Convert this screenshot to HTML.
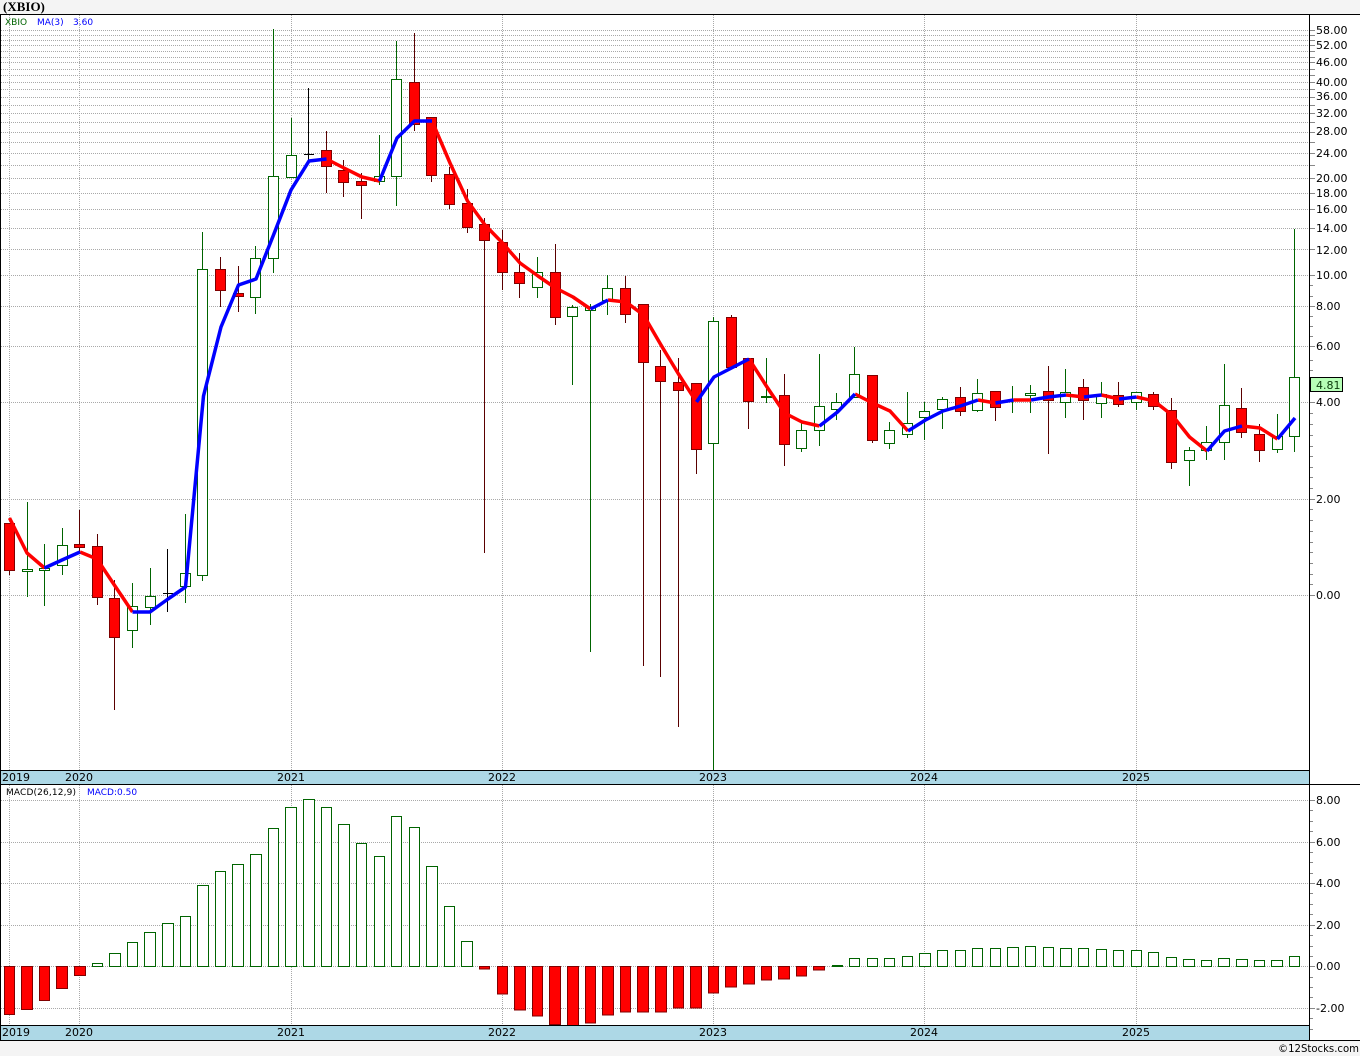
<!DOCTYPE html>
<html>
<head>
<meta charset="utf-8">
<title>XBIO</title>
<style>
html,body{margin:0;padding:0;background:#f4f4f4;width:1360px;height:1056px;overflow:hidden}
svg{display:block;position:absolute;left:0;top:0}
text{font-family:"DejaVu Sans","Liberation Sans",sans-serif;font-size:11px;fill:#000}
.t{font-family:"Liberation Serif","DejaVu Serif",serif;font-weight:bold;font-size:13px;fill:#000}
.s{font-size:9px}
</style>
</head>
<body>
<svg width="1360" height="1056" viewBox="0 0 1360 1056" xmlns="http://www.w3.org/2000/svg">
<rect x="0" y="0" width="1360" height="1056" fill="#f4f4f4"/>
<rect x="0" y="14" width="1360" height="1027" fill="#fff"/>

<!-- grid upper -->
<path fill="none" stroke="#a9a9a9" stroke-width="1" stroke-dasharray="1 1" shape-rendering="crispEdges" d="M1 30.5H1310M1 35.5H1310M1 40.5H1310M1 45.5H1310M1 51.5H1310M1 57.5H1310M1 62.5H1310M1 69.5H1310M1 75.5H1310M1 82.5H1310M1 89.5H1310M1 97.5H1310M1 105.5H1310M1 113.5H1310M1 122.5H1310M1 132.5H1310M1 142.5H1310M1 153.5H1310M1 165.5H1310M1 178.5H1310M1 193.5H1310M1 209.5H1310M1 228.5H1310M1 249.5H1310M1 275.5H1310M1 306.5H1310M1 346.5H1310M1 402.5H1310M1 499.5H1310M1 595.5H1310M9.5 15V770M79.5 15V770M291.5 15V770M502.5 15V770M713.5 15V770M924.5 15V770M1136.5 15V770"/>
<!-- grid lower -->
<path fill="none" stroke="#a9a9a9" stroke-width="1" stroke-dasharray="1 1" shape-rendering="crispEdges" d="M1 800.5H1310M1 842.5H1310M1 883.5H1310M1 925.5H1310M1 966.5H1310M1 1008.5H1310M9.5 785V1025M79.5 785V1025M291.5 785V1025M502.5 785V1025M713.5 785V1025M924.5 785V1025M1136.5 785V1025"/>
<!-- axis ticks -->
<path fill="none" stroke="#888" stroke-width="1" d="M1310 30.5h5M1310 35.5h5M1310 40.5h5M1310 45.5h5M1310 51.5h5M1310 57.5h5M1310 62.5h5M1310 69.5h5M1310 75.5h5M1310 82.5h5M1310 89.5h5M1310 97.5h5M1310 105.5h5M1310 113.5h5M1310 122.5h5M1310 132.5h5M1310 142.5h5M1310 153.5h5M1310 165.5h5M1310 178.5h5M1310 193.5h5M1310 209.5h5M1310 228.5h5M1310 249.5h5M1310 275.5h5M1310 285.5h3M1310 296.5h3M1310 306.5h5M1310 316.5h3M1310 326.5h3M1310 336.5h3M1310 346.5h5M1310 360.5h3M1310 370.5h3M1310 381.5h3M1310 391.5h3M1310 402.5h5M1310 413.5h3M1310 424.5h3M1310 435.5h3M1310 446.5h3M1310 456.5h3M1310 467.5h3M1310 477.5h3M1310 488.5h3M1310 499.5h5M1310 509.5h3M1310 520.5h3M1310 531.5h3M1310 542.5h3M1310 552.5h3M1310 563.5h3M1310 574.5h3M1310 584.5h3M1310 595.5h5M1310 800.5h5M1310 810.5h3M1310 821.5h3M1310 831.5h3M1310 842.5h5M1310 852.5h3M1310 862.5h3M1310 873.5h3M1310 883.5h5M1310 893.5h3M1310 904.5h3M1310 914.5h3M1310 925.5h5M1310 935.5h3M1310 946.5h3M1310 956.5h3M1310 966.5h5M1310 977.5h3M1310 987.5h3M1310 997.5h3M1310 1008.5h5M1310 1018.5h3M1310 1029.5h3"/>

<!-- green wicks -->
<path fill="none" stroke="#006400" stroke-width="1" d="M27.5 502V597M44.5 544V606M62.5 528V575M132.5 583V648M150.5 568V625M185.5 514V603M202.5 232V581M255.5 246V314M273.5 29V273M291.5 118V178M379.5 135V185M396.5 41V206M537.5 257V298M572.5 305V385M590.5 304V652M607.5 275V315M713.5 317V770M766.5 358V403M801.5 422V452M819.5 354V446M836.5 393V420M854.5 347V397M889.5 422V449M907.5 392V438M924.5 402V440M942.5 397V429M977.5 379V412M1012.5 386V413M1030.5 385V413M1065.5 369V418M1101.5 382V418M1136.5 392V410M1189.5 447V486M1206.5 426V460M1224.5 364V460M1277.5 414V453M1294.5 229V452"/>
<!-- red wicks -->
<path fill="none" stroke="#5a0000" stroke-width="1" d="M9.5 523V575M79.5 510V553M97.5 534V605M114.5 580V710M220.5 257V307M238.5 266V312M326.5 131V193M343.5 160V197M361.5 173V219M414.5 33V131M431.5 117V182M449.5 167V209M467.5 189V233M484.5 218V553M502.5 230V290M519.5 253V298M555.5 244V325M625.5 276V323M643.5 304V666M660.5 350V677M678.5 358V727M696.5 383V474M731.5 315V368M748.5 358V429M784.5 374V466M872.5 375V443M960.5 387V416M995.5 391V421M1048.5 366V454M1083.5 379V420M1118.5 382V407M1153.5 392V410M1171.5 398V469M1241.5 388V438M1259.5 424V462"/>
<!-- black dojis -->
<path fill="none" stroke="#000" stroke-width="1" d="M167.5 549V612M163 593.5H173M308.5 88V162M304 154.5H314"/>
<rect x="761" y="396" width="11" height="2" fill="#006400"/>

<!-- green bodies -->
<path fill="#fff" stroke="#006400" stroke-width="1" d="M22.5 569.5h10v2h-10zM39.5 568.5h10v2h-10zM57.5 545.5h10v20h-10zM127.5 606.5h10v24h-10zM145.5 596.5h10v11h-10zM180.5 573.5h10v13h-10zM197.5 269.5h10v306h-10zM250.5 258.5h10v39h-10zM268.5 176.5h10v82h-10zM286.5 155.5h10v22h-10zM374.5 176.5h10v5h-10zM391.5 79.5h10v97h-10zM532.5 272.5h10v15h-10zM567.5 307.5h10v9h-10zM585.5 307.5h10v3h-10zM602.5 288.5h10v12h-10zM708.5 321.5h10v122h-10zM796.5 430.5h10v18h-10zM814.5 406.5h10v24h-10zM831.5 402.5h10v7h-10zM849.5 374.5h10v23h-10zM884.5 430.5h10v13h-10zM902.5 423.5h10v11h-10zM919.5 411.5h10v6h-10zM937.5 399.5h10v10h-10zM972.5 393.5h10v17h-10zM1025.5 393.5h10v2h-10zM1060.5 392.5h10v10h-10zM1096.5 394.5h10v9h-10zM1131.5 392.5h10v10h-10zM1184.5 450.5h10v10h-10zM1201.5 442.5h10v8h-10zM1219.5 405.5h10v37h-10zM1272.5 436.5h10v13h-10zM1289.5 377.5h10v59h-10z"/>
<!-- red bodies -->
<path fill="#f00" stroke="#800000" stroke-width="1" d="M4.5 523.5h10v47h-10zM74.5 544.5h10v3h-10zM92.5 546.5h10v51h-10zM109.5 598.5h10v39h-10zM215.5 269.5h10v21h-10zM233.5 293.5h10v3h-10zM321.5 150.5h10v16h-10zM338.5 170.5h10v12h-10zM356.5 181.5h10v4h-10zM409.5 82.5h10v42h-10zM426.5 117.5h10v58h-10zM444.5 174.5h10v30h-10zM462.5 203.5h10v24h-10zM479.5 224.5h10v16h-10zM497.5 242.5h10v30h-10zM514.5 272.5h10v11h-10zM550.5 272.5h10v45h-10zM620.5 288.5h10v26h-10zM638.5 304.5h10v58h-10zM655.5 366.5h10v15h-10zM673.5 382.5h10v8h-10zM691.5 383.5h10v66h-10zM726.5 317.5h10v50h-10zM743.5 358.5h10v43h-10zM779.5 395.5h10v49h-10zM867.5 375.5h10v65h-10zM955.5 397.5h10v14h-10zM990.5 391.5h10v16h-10zM1043.5 391.5h10v9h-10zM1078.5 387.5h10v13h-10zM1113.5 395.5h10v9h-10zM1148.5 394.5h10v12h-10zM1166.5 410.5h10v52h-10zM1236.5 408.5h10v24h-10zM1254.5 434.5h10v16h-10z"/>

<!-- MA lines -->
<path fill="none" stroke="#f00" stroke-width="3.5" stroke-linejoin="round" d="M9.5 518L27 553L44.5 568M80 552L97 559L115 586L132.5 612M326.5 159L344 168L362 177L379.5 181M432 121L450 163L467.5 201L485 225L502.5 243L520 263L538 276L555.5 288L573 297L590.5 309M608 300L626 302L643.5 315L661 345L678.5 374L696.5 402M749 359L767 387L784.5 413L802 422L819.5 426M855 394L872.5 403L890 411L908 431M978 400L995.5 403M1013.5 400L1031 400M1066 395L1084 397M1101.5 395L1119 399M1136.5 397L1154 401L1172 415L1189.5 437L1207 451M1242 426L1260 428L1277.5 439"/>
<path fill="none" stroke="#00f" stroke-width="3.5" stroke-linejoin="round" d="M44.5 568L62 560L80 552M132.5 612L150 612L168 599L185.5 587L203.5 396L221 327L238.5 285L256 279L273.5 235L291 190L309 161L326.5 159M379.5 181L397 138L414.5 121L432 121M590.5 309L608 300M696.5 402L714 377L731.5 368L749 359M819.5 426L837.5 412L855 394M908 431L925.5 420L943 411L960.5 406L978 400M995.5 403L1013.5 400M1031 400L1048.5 397L1066 395M1084 397L1101.5 395M1119 399L1136.5 397M1207 451L1224.5 431L1242 426M1277.5 439L1295 418"/>

<!-- MACD green -->
<path fill="#fff" stroke="#006400" stroke-width="1" d="M92.5 963.5h10v3h-10zM109.5 953.5h11v13h-11zM127.5 942.5h10v24h-10zM144.5 932.5h11v34h-11zM162.5 923.5h11v43h-11zM180.5 916.5h10v50h-10zM197.5 885.5h11v81h-11zM215.5 871.5h10v95h-10zM232.5 864.5h11v102h-11zM250.5 854.5h11v112h-11zM268.5 828.5h10v138h-10zM285.5 807.5h11v159h-11zM303.5 799.5h11v167h-11zM321.5 807.5h10v159h-10zM338.5 824.5h11v142h-11zM356.5 843.5h10v123h-10zM374.5 856.5h10v110h-10zM391.5 816.5h10v150h-10zM409.5 827.5h10v139h-10zM426.5 866.5h11v100h-11zM444.5 906.5h10v60h-10zM461.5 941.5h11v25h-11zM849.5 958.5h10v8h-10zM867.5 958.5h10v8h-10zM884.5 958.5h10v8h-10zM902.5 956.5h10v10h-10zM919.5 953.5h11v13h-11zM937.5 950.5h10v16h-10zM955.5 950.5h10v16h-10zM972.5 948.5h10v18h-10zM990.5 948.5h10v18h-10zM1007.5 947.5h11v19h-11zM1025.5 946.5h10v20h-10zM1043.5 947.5h10v19h-10zM1060.5 948.5h11v18h-11zM1078.5 948.5h10v18h-10zM1096.5 949.5h10v17h-10zM1113.5 950.5h10v16h-10zM1131.5 950.5h10v16h-10zM1148.5 952.5h10v14h-10zM1166.5 957.5h10v9h-10zM1183.5 959.5h11v7h-11zM1201.5 960.5h10v6h-10zM1218.5 958.5h11v8h-11zM1236.5 959.5h11v7h-11zM1254.5 960.5h10v6h-10zM1271.5 960.5h11v6h-11zM1289.5 956.5h10v10h-10z"/>
<rect x="832" y="965" width="11" height="2" fill="#006400"/>
<!-- MACD red -->
<path fill="#f00" stroke="#800000" stroke-width="1" d="M4.5 966.5h10V1014.5h-10zM21.5 966.5h11V1009.5h-11zM39.5 966.5h10V1000.5h-10zM56.5 966.5h11V988.5h-11zM74.5 966.5h11V975.5h-11zM479.5 966.5h10V969h-10zM497.5 966.5h10V994h-10zM514.5 966.5h11V1010h-11zM532.5 966.5h10V1016h-10zM549.5 966.5h11V1024.5h-11zM567.5 966.5h11V1026h-11zM585.5 966.5h10V1023h-10zM602.5 966.5h11V1015h-11zM620.5 966.5h10V1012h-10zM637.5 966.5h11V1012h-11zM655.5 966.5h11V1012h-11zM673.5 966.5h10V1008h-10zM690.5 966.5h11V1008h-11zM708.5 966.5h10V993h-10zM725.5 966.5h11V987h-11zM743.5 966.5h11V984h-11zM761.5 966.5h10V980h-10zM778.5 966.5h11V979h-11zM796.5 966.5h10V976h-10zM813.5 966.5h11V970h-11z"/>

<!-- date bars -->
<rect x="1" y="771" width="1308" height="13" fill="#add8e6"/>
<rect x="1" y="1026" width="1308" height="14" fill="#add8e6"/>

<!-- frame -->
<path fill="none" stroke="#000" stroke-width="1" d="M0 14.5H1360M0 770.5H1309.5M0 784.5H1360M0 1025.5H1309.5M0 1040.5H1360M0.5 14V1041M1309.5 14V1041"/>

<!-- price label box -->
<rect x="1310.5" y="377.5" width="32" height="14" fill="#b6ffb6" stroke="#000" stroke-width="1"/>
<text x="1316" y="389" style="fill:#0a3a0a">4.81</text>

<!-- texts -->
<text class="t" x="3" y="11">(XBIO)</text>
<text class="s" x="5" y="25" style="fill:#006400">XBIO</text>
<text class="s" x="37" y="25" style="fill:#0000ff">MA(3)</text>
<text class="s" x="73" y="25" style="fill:#0000ff">3.60</text>
<text class="s" x="6" y="795" textLength="70" style="fill:#000">MACD(26,12,9)</text>
<text class="s" x="87" y="795" style="fill:#0000ff">MACD:0.50</text>

<text x="1316" y="34">58.00</text>
<text x="1316" y="49">52.00</text>
<text x="1316" y="66">46.00</text>
<text x="1316" y="86">40.00</text>
<text x="1316" y="100">36.00</text>
<text x="1316" y="117">32.00</text>
<text x="1316" y="135">28.00</text>
<text x="1316" y="157">24.00</text>
<text x="1316" y="182">20.00</text>
<text x="1316" y="197">18.00</text>
<text x="1316" y="213">16.00</text>
<text x="1316" y="232">14.00</text>
<text x="1316" y="254">12.00</text>
<text x="1316" y="279">10.00</text>
<text x="1316" y="310">8.00</text>
<text x="1316" y="350">6.00</text>
<text x="1316" y="406">4.00</text>
<text x="1316" y="503">2.00</text>
<text x="1316" y="599">0.00</text>

<text x="1316" y="804">8.00</text>
<text x="1316" y="846">6.00</text>
<text x="1316" y="887">4.00</text>
<text x="1316" y="929">2.00</text>
<text x="1316" y="970">0.00</text>
<text x="1316" y="1012">-2.00</text>

<text x="2" y="781">2019</text>
<text x="65" y="781">2020</text>
<text x="277" y="781">2021</text>
<text x="488" y="781">2022</text>
<text x="699" y="781">2023</text>
<text x="910" y="781">2024</text>
<text x="1122" y="781">2025</text>

<text x="2" y="1036">2019</text>
<text x="65" y="1036">2020</text>
<text x="277" y="1036">2021</text>
<text x="488" y="1036">2022</text>
<text x="699" y="1036">2023</text>
<text x="910" y="1036">2024</text>
<text x="1122" y="1036">2025</text>

<text x="1278" y="1052" textLength="81" lengthAdjust="spacingAndGlyphs">©12Stocks.com</text>
</svg>
</body>
</html>
